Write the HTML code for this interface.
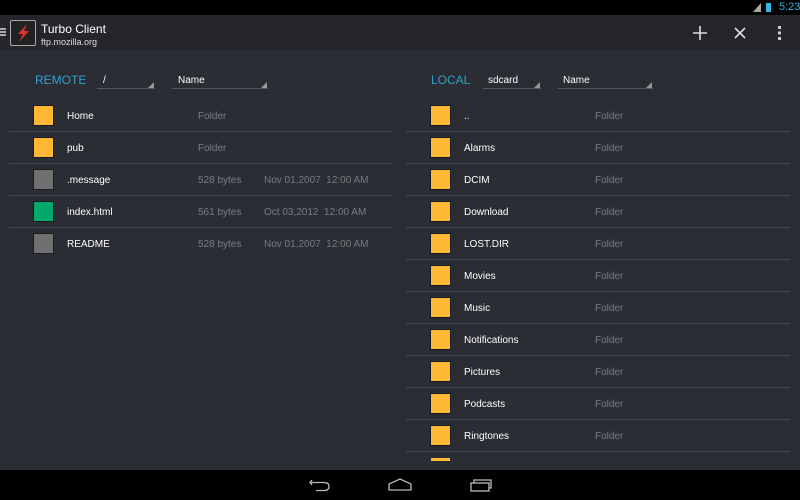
<!DOCTYPE html>
<html><head><style>
body{margin:0;width:800px;height:500px;background:#2b2d35;font-family:"Liberation Sans",sans-serif;position:relative;overflow:hidden}
.a{position:absolute}
.sb{left:0;top:0;width:800px;height:15px;background:#000}
.ab{left:0;top:15px;width:800px;height:35px;background:#24262b}
.nb{left:0;top:470px;width:800px;height:30px;background:#000}
.t{color:#fff;font-size:10px;white-space:nowrap;margin-top:1px}
.g{color:#7a7c82;font-size:10px;white-space:nowrap;margin-top:1px}
.ic{width:19px;height:19px;box-shadow:0 0 0 1px #1a1b1f}
.sep{height:1px;background:#464850}
.sp{height:1px;background:#55575e}
.tri{width:0;height:0;border-left:6px solid transparent;border-bottom:6px solid #999}
</style></head><body>
<div class="a sb"></div>
<div class="a" style="left:779px;top:1px;color:#33b5e5;font-size:11px">5:23</div>
<div class="a" style="left:766px;top:3px;width:5px;height:9px;background:#33b5e5"></div>
<div class="a" style="left:753px;top:3px;width:0;height:0;border-left:8px solid transparent;border-bottom:9px solid #aaa"></div>
<div class="a ab"></div>
<div class="a" style="left:0;top:28px;width:6px;height:8px;border-top:2px solid #aaa;border-bottom:2px solid #aaa;box-sizing:border-box"></div>
<div class="a" style="left:0;top:31px;width:6px;height:2px;background:#aaa"></div>
<div class="a" style="left:10px;top:20px;width:26px;height:26px;border:1px solid #aaa;border-radius:2px;background:#222;box-sizing:border-box"></div>
<svg class="a" style="left:10px;top:20px" width="26" height="26"><path d="M17 4 L8 14 L13 14 L9 22 L19 11 L14 11 Z" fill="#d33"/></svg>
<div class="a t" style="left:41px;top:21px;font-size:12px">Turbo Client</div>
<div class="a t" style="left:41px;top:36px;font-size:9px;color:#ddd">ftp.mozilla.org</div>
<svg class="a" style="left:690px;top:24px" width="100" height="18"><path d="M10 2V16M3 9H17" stroke="#ddd" stroke-width="1.6"/><path d="M45 4L55 14M55 4L45 14" stroke="#ddd" stroke-width="1.6"/><rect x="88" y="2" width="3" height="3" fill="#ccc"/><rect x="88" y="7.5" width="3" height="3" fill="#ccc"/><rect x="88" y="13" width="3" height="3" fill="#ccc"/></svg>

<div class="a" style="left:35px;top:73px;color:#33a0cc;font-size:12px">REMOTE</div>
<div class="a t" style="left:103px;top:74px">/</div>
<div class="a sp" style="left:97px;top:88px;width:58px"></div><div class="a tri" style="left:148px;top:82px"></div>
<div class="a t" style="left:178px;top:74px">Name</div>
<div class="a sp" style="left:172px;top:88px;width:96px"></div><div class="a tri" style="left:261px;top:82px"></div>

<div class="a" style="left:431px;top:73px;color:#33a0cc;font-size:12px">LOCAL</div>
<div class="a t" style="left:488px;top:74px">sdcard</div>
<div class="a sp" style="left:483px;top:88px;width:58px"></div><div class="a tri" style="left:534px;top:82px"></div>
<div class="a t" style="left:563px;top:74px">Name</div>
<div class="a sp" style="left:558px;top:88px;width:95px"></div><div class="a tri" style="left:646px;top:82px"></div>

<div class="a ic" style="left:34px;top:106px;background:#fdb933"></div><div class="a t" style="left:67px;top:110px">Home</div><div class="a g" style="left:198px;top:110px">Folder</div><div class="a sep" style="left:9px;top:131px;width:384px"></div>
<div class="a ic" style="left:34px;top:138px;background:#fdb933"></div><div class="a t" style="left:67px;top:142px">pub</div><div class="a g" style="left:198px;top:142px">Folder</div><div class="a sep" style="left:9px;top:163px;width:384px"></div>
<div class="a ic" style="left:34px;top:170px;background:#707070"></div><div class="a t" style="left:67px;top:174px">.message</div><div class="a g" style="left:198px;top:174px">528 bytes</div><div class="a g" style="left:264px;top:174px">Nov 01,2007&nbsp; 12:00 AM</div><div class="a sep" style="left:9px;top:195px;width:384px"></div>
<div class="a ic" style="left:34px;top:202px;background:#00a86b"></div><div class="a t" style="left:67px;top:206px">index.html</div><div class="a g" style="left:198px;top:206px">561 bytes</div><div class="a g" style="left:264px;top:206px">Oct 03,2012&nbsp; 12:00 AM</div><div class="a sep" style="left:9px;top:227px;width:384px"></div>
<div class="a ic" style="left:34px;top:234px;background:#707070"></div><div class="a t" style="left:67px;top:238px">README</div><div class="a g" style="left:198px;top:238px">528 bytes</div><div class="a g" style="left:264px;top:238px">Nov 01,2007&nbsp; 12:00 AM</div>

<div class="a ic" style="left:431px;top:106px;background:#fdb933"></div><div class="a t" style="left:464px;top:110px">..</div><div class="a g" style="left:595px;top:110px">Folder</div><div class="a sep" style="left:406px;top:131px;width:384px"></div>
<div class="a ic" style="left:431px;top:138px;background:#fdb933"></div><div class="a t" style="left:464px;top:142px">Alarms</div><div class="a g" style="left:595px;top:142px">Folder</div><div class="a sep" style="left:406px;top:163px;width:384px"></div>
<div class="a ic" style="left:431px;top:170px;background:#fdb933"></div><div class="a t" style="left:464px;top:174px">DCIM</div><div class="a g" style="left:595px;top:174px">Folder</div><div class="a sep" style="left:406px;top:195px;width:384px"></div>
<div class="a ic" style="left:431px;top:202px;background:#fdb933"></div><div class="a t" style="left:464px;top:206px">Download</div><div class="a g" style="left:595px;top:206px">Folder</div><div class="a sep" style="left:406px;top:227px;width:384px"></div>
<div class="a ic" style="left:431px;top:234px;background:#fdb933"></div><div class="a t" style="left:464px;top:238px">LOST.DIR</div><div class="a g" style="left:595px;top:238px">Folder</div><div class="a sep" style="left:406px;top:259px;width:384px"></div>
<div class="a ic" style="left:431px;top:266px;background:#fdb933"></div><div class="a t" style="left:464px;top:270px">Movies</div><div class="a g" style="left:595px;top:270px">Folder</div><div class="a sep" style="left:406px;top:291px;width:384px"></div>
<div class="a ic" style="left:431px;top:298px;background:#fdb933"></div><div class="a t" style="left:464px;top:302px">Music</div><div class="a g" style="left:595px;top:302px">Folder</div><div class="a sep" style="left:406px;top:323px;width:384px"></div>
<div class="a ic" style="left:431px;top:330px;background:#fdb933"></div><div class="a t" style="left:464px;top:334px">Notifications</div><div class="a g" style="left:595px;top:334px">Folder</div><div class="a sep" style="left:406px;top:355px;width:384px"></div>
<div class="a ic" style="left:431px;top:362px;background:#fdb933"></div><div class="a t" style="left:464px;top:366px">Pictures</div><div class="a g" style="left:595px;top:366px">Folder</div><div class="a sep" style="left:406px;top:387px;width:384px"></div>
<div class="a ic" style="left:431px;top:394px;background:#fdb933"></div><div class="a t" style="left:464px;top:398px">Podcasts</div><div class="a g" style="left:595px;top:398px">Folder</div><div class="a sep" style="left:406px;top:419px;width:384px"></div>
<div class="a ic" style="left:431px;top:426px;background:#fdb933"></div><div class="a t" style="left:464px;top:430px">Ringtones</div><div class="a g" style="left:595px;top:430px">Folder</div><div class="a sep" style="left:406px;top:451px;width:384px"></div>
<div class="a" style="left:431px;top:458px;width:19px;height:3px;background:#fdb933"></div>

<div class="a nb"></div>
<svg class="a" style="left:300px;top:474px" width="200" height="22"><path d="M12 6L10 8.5L12 11M10 8.5H24Q29 8.5 29 12.5Q29 16.5 24 16.5H16" stroke="#bbb" stroke-width="1.3" fill="none"/><path d="M89 16V10L100 5L111 10V16Z" stroke="#bbb" stroke-width="1.3" fill="none"/><rect x="171" y="9" width="18" height="8" stroke="#bbb" stroke-width="1.3" fill="none"/><path d="M174 9V6H191V14H189" stroke="#bbb" stroke-width="1.3" fill="none"/></svg>
</body></html>
